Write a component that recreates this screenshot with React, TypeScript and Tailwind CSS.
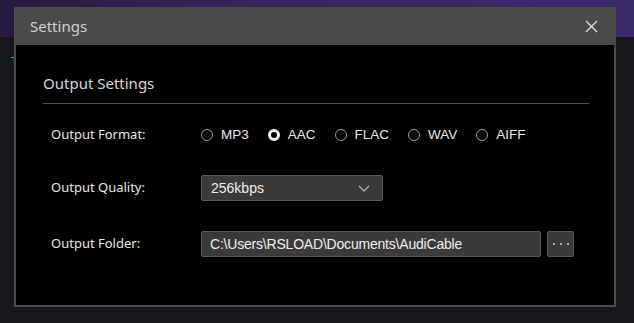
import React from "react";

const Radio = ({ label, checked }: { label: string; checked?: boolean }) => (
  <div className="flex items-center">
    {checked ? (
      <span className="w-[12px] h-[12px] rounded-full border-[3.5px] border-[#f2f2f2] bg-black" />
    ) : (
      <span className="w-[12px] h-[12px] rounded-full border border-[#9a9a9a] bg-black" />
    )}
    <span className="ml-[8px] text-[13.5px] text-[#e8e8e8] font-['Liberation_Sans',Arial,sans-serif]">{label}</span>
  </div>
);

export default function App() {
  return (
    <div className="relative w-[634px] h-[323px] overflow-hidden bg-[#16171b]">
      <div className="h-[37px] bg-[linear-gradient(90deg,#261b3e_0%,#35275a_40%,#3c2b6c_100%)]" />
      <div className="pl-[11px] pt-[15px] text-[13px] text-[#8a8a8a] font-['Noto_Sans',sans-serif]">T</div>

      <div className="absolute left-[14px] top-[7px] w-[602px] h-[300px] bg-[#4a4a4a] flex flex-col px-[2px] pb-[2px] font-['Noto_Sans',sans-serif]">
        <div className="h-[38px] flex items-center justify-between pl-[14px] pr-[16px] shrink-0">
          <span className="text-[15px] text-[#cfcfcf]">Settings</span>
          <svg width="13" height="13" viewBox="0 0 13 13" className="mt-[1px]">
            <path d="M1 1 L12 12 M12 1 L1 12" stroke="#e0e0e0" strokeWidth="1.4" />
          </svg>
        </div>
        <div className="flex-1 bg-black pl-[27px] pr-[25px] pt-[27px]">
          <div className="text-[15px] text-[#d8d8d8] leading-[22px] pb-[9px] border-b border-[#555]">Output Settings</div>
          <div className="pl-[8px] pt-[19px] flex flex-col">
            <div className="flex items-center h-[24px]">
              <span className="w-[150px] text-[13px] text-[#e6e6e6]">Output Format:</span>
              <div className="flex items-center gap-[19px]">
                <Radio label="MP3" />
                <Radio label="AAC" checked />
                <Radio label="FLAC" />
                <Radio label="WAV" />
                <Radio label="AIFF" />
              </div>
            </div>
            <div className="flex items-center h-[26px] mt-[28px]">
              <span className="w-[150px] text-[13px] text-[#e6e6e6]">Output Quality:</span>
              <div className="w-[182px] h-[26px] bg-[#3a3a3a] border border-[#5a5a5a] rounded-[2px] flex items-center justify-between pl-[9px] pr-[12px]">
                <span className="text-[14px] text-[#ededed] font-['Liberation_Sans',Arial,sans-serif]">256kbps</span>
                <svg width="12" height="7" viewBox="0 0 12 7">
                  <path d="M1 1 L6 6 L11 1" stroke="#bdbdbd" strokeWidth="1.2" fill="none" />
                </svg>
              </div>
            </div>
            <div className="flex items-center h-[26px] mt-[30px]">
              <span className="w-[150px] text-[13px] text-[#e6e6e6]">Output Folder:</span>
              <div className="w-[340px] h-[26px] bg-[#3a3a3a] border border-[#5a5a5a] rounded-[2px] flex items-center pl-[8px]">
                <span className="text-[14px] text-[#ededed] tracking-[-0.2px] font-['Liberation_Sans',Arial,sans-serif]">C:\Users\RSLOAD\Documents\AudiCable</span>
              </div>
              <div className="ml-[6px] w-[27px] h-[26px] bg-[#3a3a3a] border border-[#5a5a5a] rounded-[2px] flex items-center justify-center gap-[5px]">
                <span className="w-[2px] h-[2px] bg-[#aaa]" />
                <span className="w-[2px] h-[2px] bg-[#aaa]" />
                <span className="w-[2px] h-[2px] bg-[#aaa]" />
              </div>
            </div>
          </div>
        </div>
      </div>
    </div>
  );
}
